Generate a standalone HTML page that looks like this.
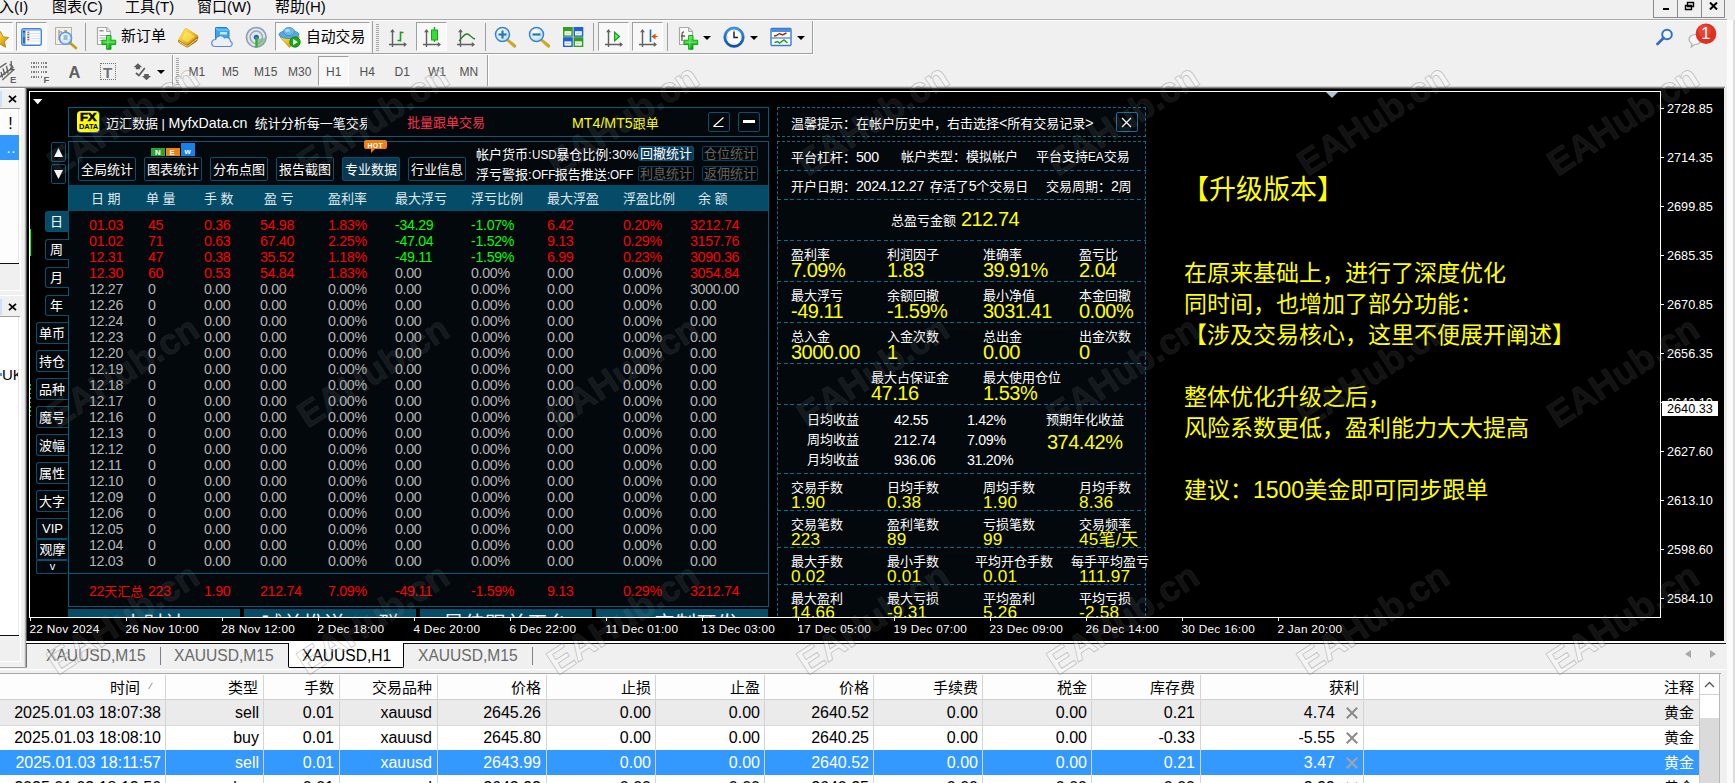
<!DOCTYPE html>
<html lang="zh"><head><meta charset="utf-8"><title>MT4</title>
<style>
*{margin:0;padding:0;box-sizing:border-box}
html,body{width:1735px;height:783px;overflow:hidden;background:#f0f0f0}
body{position:relative;font-family:"Liberation Sans","Noto Sans CJK SC",sans-serif;color:#000}
.a{position:absolute;white-space:nowrap}
.t{position:absolute;white-space:nowrap;line-height:1}
/* menu */
#menu{left:0;top:0;width:1735px;height:19px;background:#f0f0f0}
#menu span{position:absolute;top:-3px;font-size:15px;line-height:20px;white-space:nowrap;letter-spacing:0}
/* toolbars */
.hl{position:absolute;height:1px;left:0}
.sep{position:absolute;width:1px;background:#a0a0a0}
.pressed{position:absolute;background:#f7f7f7;border:1px solid #d8d8d8}
.tbt{position:absolute;font-size:15px;line-height:18px;white-space:nowrap}
.tf{position:absolute;font-size:12px;line-height:14px;color:#505050;white-space:nowrap}
/* chart */
#chart{left:26px;top:88px;width:1698px;height:553px;background:#000;overflow:hidden;border-left:1px solid #505050;border-top:1px solid #404040}
.pn{position:absolute;font-size:13px;line-height:16px;white-space:nowrap;color:#fff}
.l{font-size:14.2px}
.u{font-size:13.6px;display:inline-block;transform:scaleX(.86);transform-origin:left center;margin-right:-4px;line-height:1}
.n{font-size:14.2px;letter-spacing:-0.3px}
.box{position:absolute;border:1px solid #045a7a;background:#02080c}
.btn{position:absolute;border:1px solid #07506e;background:#02080c;color:#fff;font-size:13px;line-height:20px;text-align:center;white-space:nowrap;border-radius:2px}
.r{color:#f00}.g{color:#0f0}.w{color:#b4b4b4}.y{color:#ff0}
.row{position:absolute;left:0;height:16px;width:700px}
.row span{position:absolute;top:0;font-size:14.2px;letter-spacing:-0.3px;line-height:16px;white-space:nowrap}
.row span i{font-style:normal;font-size:13px;letter-spacing:0}
.dash{position:absolute;width:369px;height:1px;background:repeating-linear-gradient(to right,#0a6c8e 0,#0a6c8e 4px,transparent 4px,transparent 6.667px)}
.wm.d{color:rgba(150,150,150,.125);-webkit-text-stroke:1px rgba(120,120,120,.15)}
.vl.sm{font-size:17.2px;letter-spacing:0.2px}
.lb{position:absolute;font-size:13px;line-height:16px;color:#fff;white-space:nowrap}
.lb.n{font-size:14.2px;letter-spacing:-0.3px}
.vl{position:absolute;font-size:20px;letter-spacing:-0.5px;line-height:20px;color:#ff0;white-space:nowrap}
.big{position:absolute;font-size:23px;line-height:31px;color:#ff0;white-space:nowrap;left:1157px}
.ax{position:absolute;font-size:12.7px;line-height:14px;color:#fff;white-space:nowrap}
.wm{position:absolute;font-size:36px;line-height:36px;font-weight:bold;color:rgba(255,255,255,.3);-webkit-text-stroke:1px rgba(0,0,0,.2);transform:translate(-50%,-50%) rotate(-33deg);white-space:nowrap;pointer-events:none}
/* tabs */
.tab{position:absolute;top:645.5px;font-size:15.6px;line-height:20px;color:#6a6a6a;white-space:nowrap}
/* table */
.th{position:absolute;top:677px;font-size:15px;line-height:22px;text-align:right;white-space:nowrap}
.td{position:absolute;font-size:16px;line-height:25px;text-align:right;white-space:nowrap}
.cs{position:absolute;top:675px;width:1px;height:108px;background:#d4d4d4}
</style></head>
<body>
<div id="menu" class="a"><span style="left:-1px">入(I)</span><span style="left:52px">图表(C)</span><span style="left:125px">工具(T)</span><span style="left:197px">窗口(W)</span><span style="left:275px">帮助(H)</span></div>
<div class="hl" style="top:19px;width:1727px;background:#a8a8a8"></div><div class="hl" style="top:20px;width:1727px;background:#fff"></div>
<div class="a" style="left:1653px;top:0;width:72px;height:18px;border:1px solid #8a8a8a;border-top:none;background:#f0f0f0"></div><div class="sep" style="left:1677px;top:0;height:17px;background:#8a8a8a"></div><div class="sep" style="left:1701px;top:0;height:17px;background:#8a8a8a"></div><div class="a" style="left:1663px;top:8px;width:6px;height:2px;background:#000"></div><svg class="a" style="left:1684px;top:1px" width="12" height="10" viewBox="0 0 12 10"><path d="M3.5 1.5h6v4h-6z M1.5 4.5h6v4h-6z" fill="#f0f0f0" stroke="#000" stroke-width="1.4"/></svg><svg class="a" style="left:1709px;top:2px" width="9" height="8" viewBox="0 0 9 8"><path d="M1 0.5L8 7.5M8 0.5L1 7.5" stroke="#000" stroke-width="2"/></svg>
<div class="hl" style="top:86px;width:1725px;background:#d0d0d0"></div><div class="hl" style="top:87px;width:1725px;background:#8c8c8c"></div>
<svg width="0" height="0" style="position:absolute"><defs><linearGradient id="gGold" x1="0" y1="0" x2="1" y2="1"><stop offset="0" stop-color="#ffe870"/><stop offset=".5" stop-color="#f0c020"/><stop offset="1" stop-color="#b07810"/></linearGradient><linearGradient id="gGreen" x1="0" y1="0" x2="0" y2="1"><stop offset="0" stop-color="#60f060"/><stop offset="1" stop-color="#08a008"/></linearGradient><radialGradient id="gLens" cx=".4" cy=".35" r=".7"><stop offset="0" stop-color="#ffffff"/><stop offset="1" stop-color="#b8dcf8"/></radialGradient><linearGradient id="gBlue" x1="0" y1="0" x2="0" y2="1"><stop offset="0" stop-color="#3a98ec"/><stop offset="1" stop-color="#0a4cb0"/></linearGradient><linearGradient id="gHandle" x1="0" y1="0" x2="1" y2="0"><stop offset="0" stop-color="#f8e060"/><stop offset="1" stop-color="#c09010"/></linearGradient></defs></svg><div class="a" style="left:0;top:53px;width:813px;height:1px;background:#a0a0a0"></div><div class="a" style="left:0;top:54px;width:814px;height:1px;background:#fff"></div><div class="a" style="left:812px;top:21px;width:1px;height:33px;background:#a0a0a0"></div><div class="a" style="left:813px;top:21px;width:1px;height:34px;background:#fff"></div><div class="a" style="left:0;top:22px;width:13px;height:29px;background:#f8f8f8;border-top:1px solid #a0a0a0;border-right:1px solid #fff;border-bottom:1px solid #fff"></div><svg class="a" style="left:-8.5px;top:30.5px" width="18" height="18" viewBox="0 0 18 18" ><path d="M8.5 0.5l2.5 5.3 5.7 .7-4.2 4 1.1 5.8-5.1-2.9-5.1 2.9 1.1-5.800-4.2-4 5.700-.7z" fill="url(#gGold)" stroke="#b08018" stroke-width=".8"/></svg><div class="a" style="left:16px;top:22px;width:31px;height:29px;background:#f8f8f8;border-left:1px solid #a0a0a0;border-top:1px solid #a0a0a0;border-right:1px solid #fff;border-bottom:1px solid #fff"></div><svg class="a" style="left:21px;top:28px" width="21" height="18" viewBox="0 0 21 18" ><rect x=".7" y=".7" width="19.600" height="16.600" rx="2" fill="#fff" stroke="#3f84d8" stroke-width="1.400"/><rect x="1.400" y="1.400" width="3.200" height="15.200" fill="#5a9ce8"/><rect x="1.400" y="1.400" width="18.200" height="1.300" fill="#7ab4f0"/><path d="M6 5.500h13M6 8h13M6 10.500h13M6 13h13" stroke="#d4e0fa" stroke-width="1"/><rect x="6.300" y="3.600" width="2" height="1.300" fill="#f04040"/><rect x="6.300" y="6" width="2" height="1.300" fill="#508050"/><rect x="6.300" y="8.600" width="2" height="1.300" fill="#406040"/><rect x="6.300" y="11" width="2" height="1.300" fill="#f04040"/><rect x="2.300" y="3" width="1.400" height="1.400" fill="#102040"/><rect x="2.300" y="9" width="1.400" height="6" fill="#305890"/></svg><svg class="a" style="left:54px;top:26px" width="25" height="24" viewBox="0 0 25 24" ><rect x="1.500" y="1.500" width="16" height="17" fill="#f4efe4" stroke="#b8b0a0"/><path d="M5 4v10M5 6h3M12 4v8M10 5h3" stroke="#808890" stroke-width="1"/><path d="M15.500 16.500l6.500 5.500" stroke="#c89818" stroke-width="2.600" stroke-linecap="round"/><circle cx="11.500" cy="12.300" r="6" fill="url(#gLens)" fill-opacity=".85" stroke="#5a98e0" stroke-width="1.600"/><rect x="9.500" y="9" width="4" height="5" fill="#a0b8d0"/></svg><div class="sep" style="left:85px;top:23px;height:28px"></div><svg class="a" style="left:95px;top:26px" width="23" height="25" viewBox="0 0 23 25" ><path d="M2.500 1.500h9l4 4v13h-13z" fill="#fafafa" stroke="#a8a8a8" stroke-width="1.200" stroke-linejoin="round"/><path d="M11.500 1.500v4h4" fill="#e0e0e0" stroke="#a8a8a8"/><rect x="4.500" y="4" width="4" height="1.500" fill="#909090"/><path d="M4.500 9.500h8M4.500 12h8M4.500 14.500h5" stroke="#b0b0b0"/><path d="M11.600 9.500h4.400v4.700h4.700v4.400h-4.700v4.700h-4.400v-4.700h-4.700v-4.400h4.700z" fill="url(#gGreen)" stroke="#08a008" stroke-width=".9"/><path d="M12.800 10.500v12M8 16.200h11.500" stroke="#90ff90" stroke-width="1" stroke-opacity=".6"/></svg><div class="tbt" style="left:121px;top:27px">新订单</div><svg class="a" style="left:177px;top:27px" width="23" height="22" viewBox="0 0 23 22" ><path d="M7.500 2.300q1-1.400 2.600-.5l10.400 6.700q1.300 1 .7 2.600l-.8 2.200q-.4 1-1.400 1.700l-7.500 5q-1.300.8-2.600 0l-6.900-4.300q-1.400-1-.7-2.500z" fill="#a86c10"/><path d="M7.600 1.900q1-1.300 2.500-.4l10 6.500q1.300 1 .2 2.100l-9 7.200q-1.200.9-2.500.1l-6.300-4q-1.300-.9-.6-2.300z" fill="url(#gGold)"/><path d="M8.500 3.500l9.500 6-7.500 6-5.500-3.500z" fill="#fff27a" fill-opacity=".55"/><path d="M2.300 14.600l6.700 4.200q1.200.7 2.400-.1l8.600-6.700" fill="none" stroke="#ffe890" stroke-width=".9"/></svg><svg class="a" style="left:211px;top:26px" width="23" height="22" viewBox="0 0 23 22" ><path d="M4.500 1.500h11l2.500 2.500v10h-13.500z" fill="#38a8f0" stroke="#2080d8"/><path d="M4.500 1.500l2.500 2.500h11" fill="none" stroke="#90d0ff"/><rect x="9" y="6" width="7" height="2.500" fill="#c0e4ff"/><path d="M4 20.500a3.500 3.500 0 0 1 .5-7 5 5 0 0 1 9-1.500 4 4 0 0 1 6 3.500 2.600 2.600 0 0 1-.5 5z" fill="#e8f0fa" stroke="#6088c8" stroke-width="1.200"/></svg><svg class="a" style="left:245px;top:26px" width="23" height="23" viewBox="0 0 23 23" ><circle cx="11.300" cy="11.300" r="9.800" fill="#e4e8e4" stroke="#8ca0b8" stroke-width="1.600"/><circle cx="11.300" cy="11.300" r="6.200" fill="none" stroke="#98a8c0" stroke-width="1.500"/><circle cx="11.300" cy="11.300" r="2.600" fill="#2060d0"/><path d="M11.300 11.300A9.800 9.800 0 0 0 21 11.300 9.800 9.800 0 0 1 11.300 21z" fill="#80b080" fill-opacity=".7"/><rect x="10.300" y="11.300" width="2.400" height="10" fill="#30b030"/></svg><div class="a" style="left:275px;top:22px;width:95px;height:29px;background:#f8f8f8;border-left:1px solid #a0a0a0;border-top:1px solid #a0a0a0;border-right:1px solid #fff;border-bottom:1px solid #fff"></div><svg class="a" style="left:278px;top:26px" width="24" height="23" viewBox="0 0 24 23" ><path d="M2 11l9.500 10.500 10-10.500-4-4h-11z" fill="url(#gGold)" stroke="#c09818" stroke-width=".8"/><ellipse cx="11" cy="8.500" rx="10" ry="4" fill="#58a8e0" stroke="#3888c8" stroke-width=".8"/><ellipse cx="11" cy="5.500" rx="5.500" ry="4" fill="#70b8e8" stroke="#3888c8" stroke-width=".8"/><ellipse cx="9.500" cy="4.500" rx="2.500" ry="1.500" fill="#b0dcf8"/><circle cx="17" cy="16" r="5.200" fill="#18a818" stroke="#088008" stroke-width=".8"/><path d="M15.200 13l4.600 3-4.600 3z" fill="#fff"/></svg><div class="tbt" style="left:306px;top:28px;font-size:14.8px">自动交易</div><div class="sep" style="left:372px;top:21px;height:32px"></div><div class="a" style="left:376px;top:24px;width:3px;height:28px;background:repeating-linear-gradient(to bottom,#a8a8a8 0,#a8a8a8 1px,#f0f0f0 1px,#f0f0f0 2px)"></div><svg class="a" style="left:0;top:0" width="820" height="55" viewBox="0 0 820 55"><path d="M392.5 30.500V47M389 44.500H404" stroke="#606060" stroke-width="1.400" fill="none"/><path d="M392.5 29l-2.400 3.200h4.800z M407 44.500l-3.200-2.400v4.800z" fill="#606060"/><path d="M400.500 31.500V41.500M400.500 32.500h3M397.500 40.500h3" stroke="#18a018" stroke-width="1.600" fill="none"/></svg><div class="a" style="left:416px;top:22px;width:31px;height:29px;background:#f8f8f8;border-left:1px solid #a0a0a0;border-top:1px solid #a0a0a0;border-right:1px solid #fff;border-bottom:1px solid #fff"></div><svg class="a" style="left:0;top:0" width="820" height="55" viewBox="0 0 820 55"><path d="M426.5 30.500V47M423 44.500H438" stroke="#606060" stroke-width="1.400" fill="none"/><path d="M426.5 29l-2.400 3.200h4.800z M441 44.500l-3.200-2.400v4.800z" fill="#606060"/><path d="M434.500 27v15" stroke="#18a018" stroke-width="1.400"/><rect x="431.500" y="30" width="6" height="10" fill="#30e030" stroke="#18a018"/><path d="M460.5 30.500V47M457 44.500H472" stroke="#606060" stroke-width="1.400" fill="none"/><path d="M460.5 29l-2.400 3.200h4.800z M475 44.500l-3.200-2.400v4.800z" fill="#606060"/><path d="M459 41c3-3 5-7 8-7s4 4 8 5" stroke="#208020" stroke-width="1.400" fill="none"/></svg><div class="sep" style="left:485px;top:23px;height:28px"></div><svg class="a" style="left:0;top:0" width="820" height="55" viewBox="0 0 820 55"><path d="M508 40.500l6.500 5.500" stroke="url(#gHandle)" stroke-width="3.200" stroke-linecap="round"/><path d="M508 40.500l6.500 5.500" stroke="#d0a828" stroke-width="2.400" stroke-linecap="round"/><circle cx="502.5" cy="34.500" r="7" fill="url(#gLens)" stroke="#3c84d0" stroke-width="1.500"/><path d="M498.5 34.500h8" stroke="#2878a8" stroke-width="2.200"/><path d="M502.5 30.500v8" stroke="#2878a8" stroke-width="2.200"/><path d="M542 40.500l6.500 5.500" stroke="url(#gHandle)" stroke-width="3.200" stroke-linecap="round"/><path d="M542 40.500l6.500 5.500" stroke="#d0a828" stroke-width="2.400" stroke-linecap="round"/><circle cx="536.5" cy="34.500" r="7" fill="url(#gLens)" stroke="#3c84d0" stroke-width="1.500"/><path d="M532.5 34.500h8" stroke="#2878a8" stroke-width="2.200"/><rect x="563" y="27" width="9.800" height="9.800" fill="#30a020"/><rect x="564.5" y="31.2" width="6.800" height="4.200" fill="#fff"/><rect x="565.6" y="32.6" width="4.500" height="1.200" fill="#30a020" fill-opacity=".35"/><rect x="573.5" y="27" width="9.800" height="9.800" fill="#2060e0"/><rect x="575" y="31.2" width="6.800" height="4.200" fill="#fff"/><rect x="576.1" y="32.6" width="4.500" height="1.200" fill="#2060e0" fill-opacity=".35"/><rect x="563" y="37.2" width="9.800" height="9.800" fill="#2060e0"/><rect x="564.5" y="41.4" width="6.800" height="4.200" fill="#fff"/><rect x="565.6" y="42.8" width="4.500" height="1.200" fill="#2060e0" fill-opacity=".35"/><rect x="573.5" y="37.2" width="9.800" height="9.800" fill="#30a020"/><rect x="575" y="41.4" width="6.800" height="4.200" fill="#fff"/><rect x="576.1" y="42.8" width="4.500" height="1.200" fill="#30a020" fill-opacity=".35"/></svg><div class="sep" style="left:593px;top:23px;height:28px"></div><div class="a" style="left:598px;top:22px;width:31px;height:29px;background:#f8f8f8;border-left:1px solid #a0a0a0;border-top:1px solid #a0a0a0;border-right:1px solid #fff;border-bottom:1px solid #fff"></div><div class="a" style="left:632px;top:22px;width:31px;height:29px;background:#f8f8f8;border-left:1px solid #a0a0a0;border-top:1px solid #a0a0a0;border-right:1px solid #fff;border-bottom:1px solid #fff"></div><svg class="a" style="left:0;top:0" width="820" height="55" viewBox="0 0 820 55"><path d="M608.5 30.500V47M605 44.500H620" stroke="#606060" stroke-width="1.400" fill="none"/><path d="M608.5 29l-2.400 3.200h4.800z M623 44.500l-3.200-2.400v4.800z" fill="#606060"/><path d="M614.600 32.300l4.800 4.200-4.800 4.200z" fill="#70e870" stroke="#18a018" stroke-width="1.300"/><path d="M642.5 30.500V47M639 44.500H654" stroke="#606060" stroke-width="1.400" fill="none"/><path d="M642.5 29l-2.400 3.200h4.800z M657 44.500l-3.200-2.400v4.800z" fill="#606060"/><path d="M650.500 29.500V42" stroke="#1870a8" stroke-width="1.600"/><path d="M657.500 36.500h-5" stroke="#e05008" stroke-width="1.400"/><path d="M651.500 36.500l4-3v6z" fill="#e05008"/></svg><div class="sep" style="left:667px;top:23px;height:28px"></div><svg class="a" style="left:677px;top:26px" width="23" height="25" viewBox="0 0 23 25" ><path d="M2.500 1.500h9l4 4v13h-13z" fill="#fafafa" stroke="#a8a8a8" stroke-width="1.200" stroke-linejoin="round"/><path d="M11.500 1.500v4h4" fill="#e0e0e0" stroke="#a8a8a8"/><path d="M7 6c-2 0-2 1-2 3v6M4 10h4" stroke="#605840" stroke-width="1.300" fill="none"/><path d="M11.600 9.500h4.400v4.700h4.700v4.400h-4.700v4.700h-4.400v-4.700h-4.700v-4.400h4.700z" fill="url(#gGreen)" stroke="#08a008" stroke-width=".9"/><path d="M12.800 10.500v12M8 16.200h11.500" stroke="#90ff90" stroke-width="1" stroke-opacity=".6"/></svg><svg class="a" style="left:703px;top:36px" width="8" height="4" viewBox="0 0 8 4" ><path d="M0 0h8L4 4z" fill="#000"/></svg><svg class="a" style="left:723px;top:26px" width="23" height="23" viewBox="0 0 23 23" ><circle cx="11" cy="11.200" r="9" fill="#fff" stroke="url(#gBlue)" stroke-width="2.600"/><circle cx="11" cy="11.200" r="10.200" fill="none" stroke="#1860b8" stroke-width=".6"/><path d="M11 5.500v6h4" stroke="#202020" stroke-width="1.500" fill="none"/><path d="M11 3.800v1M11 17.500v1M3.800 11.200h1M17.500 11.200h1" stroke="#a0a0a0"/></svg><svg class="a" style="left:750px;top:36px" width="8" height="4" viewBox="0 0 8 4" ><path d="M0 0h8L4 4z" fill="#000"/></svg><svg class="a" style="left:770px;top:27px" width="23" height="20" viewBox="0 0 23 20" ><rect x="1" y="1.500" width="20" height="17" rx="1" fill="#fff" stroke="#3878d0" stroke-width="1.400"/><rect x="1.500" y="2" width="19" height="3" fill="#4890e0"/><path d="M1.500 11h19" stroke="#5090e0" stroke-width="1.400"/><path d="M4 9l2.500-.5 3-2 3 1.500 4-2" stroke="#b02808" stroke-width="1.500" fill="none"/><path d="M4.500 15.500l3-1 2 1.500 4.500-3 3.500 3" stroke="#18a018" stroke-width="1.500" fill="none"/></svg><svg class="a" style="left:797px;top:36px" width="8" height="4" viewBox="0 0 8 4" ><path d="M0 0h8L4 4z" fill="#000"/></svg><svg class="a" style="left:1655px;top:27px" width="20" height="20" viewBox="0 0 20 20" ><circle cx="12" cy="7.500" r="4.800" fill="#f4f8ff" stroke="#3070d0" stroke-width="2"/><path d="M8.500 11l-6 6" stroke="#3868c8" stroke-width="2.800" stroke-linecap="round"/></svg><svg class="a" style="left:1687px;top:22px" width="34" height="28" viewBox="0 0 34 28" ><path d="M2 17.500a6 5 0 0 1 12 0 6 5 0 0 1-6.500 5l-3.200 2.500 .5-3.400a5.500 5 0 0 1-2.800-4.100z" fill="#f6f6f6" stroke="#b0b0b0" stroke-width="1.200"/><circle cx="19" cy="11.800" r="10.300" fill="#e03020"/><circle cx="17.500" cy="9" r="6.500" fill="#f05848" fill-opacity=".5"/></svg><div class="t" style="left:1701px;top:25px;font-size:17px;color:#fff">1</div>
<div class="a" style="left:487px;top:55px;width:1px;height:31px;background:#a0a0a0"></div><div class="a" style="left:488px;top:55px;width:1px;height:31px;background:#fff"></div><svg class="a" style="left:0px;top:60px" width="17" height="24" viewBox="0 0 17 24" ><path d="M-1 8L6.500 3.200M-1 17.500L13.500 7.200M2.300 20L14.500 9" stroke="#6a6a6a" stroke-width="1.500" fill="none"/><path d="M11.200 1V10.500M9.500 4.500l3.500 2M10 8.500l4 1.500M3 8.500l2 6.500M6.500 6l1.500 7.500M1 12l1.500 5.500" stroke="#5a5a5a" stroke-width="1.300" fill="none"/></svg><div class="t" style="left:10px;top:75px;font-size:9.500px;font-weight:bold;color:#606060">E</div><div class="a" style="left:31px;top:62px;width:17px;height:2px;background:repeating-linear-gradient(to right,#808080 0,#808080 1.200px,#f0f0f0 1.200px,#f0f0f0 2.400px)"></div><div class="a" style="left:31px;top:66px;width:17px;height:2px;background:repeating-linear-gradient(to right,#808080 0,#808080 1.200px,#f0f0f0 1.200px,#f0f0f0 2.400px)"></div><div class="a" style="left:31px;top:71px;width:17px;height:2px;background:repeating-linear-gradient(to right,#808080 0,#808080 1.200px,#f0f0f0 1.200px,#f0f0f0 2.400px)"></div><div class="a" style="left:31px;top:76px;width:12px;height:2px;background:repeating-linear-gradient(to right,#808080 0,#808080 1.200px,#f0f0f0 1.200px,#f0f0f0 2.400px)"></div><div class="t" style="left:43.500px;top:75px;font-size:9.500px;font-weight:bold;color:#606060">F</div><div class="t" style="left:68.500px;top:63.500px;font-size:16.500px;font-weight:bold;color:#606060">A</div><div class="a" style="left:100px;top:63px;width:16px;height:17px;border:1.500px dotted #707070"></div><div class="t" style="left:103px;top:65px;font-size:15px;font-weight:bold;color:#707070">T</div><svg class="a" style="left:133px;top:61px" width="19" height="20" viewBox="0 0 19 20" ><path d="M4.900 2.300L9.200 6.300H7V8.200H2.800V6.300H.6z M13.500 19.200L9 15H11.200V13H15.800V15H18z" fill="#5c5c5c"/><path d="M2.900 12l3 2.500L11.800 7" stroke="#5c5c5c" stroke-width="1.700" fill="none"/></svg><svg class="a" style="left:157px;top:70px" width="8" height="4" viewBox="0 0 8 4" ><path d="M0 0h8L4 4z" fill="#000"/></svg><div class="a" style="left:172px;top:55px;width:1px;height:31px;background:#a0a0a0"></div><div class="a" style="left:173px;top:55px;width:1px;height:31px;background:#fff"></div><div class="a" style="left:176px;top:58px;width:3px;height:27px;background:repeating-linear-gradient(to bottom,#a8a8a8 0,#a8a8a8 1px,#f0f0f0 1px,#f0f0f0 2px)"></div><div class="a" style="left:318px;top:56px;width:31px;height:30px;background:#f8f8f8;border-left:1px solid #a0a0a0;border-top:1px solid #a0a0a0;border-right:1px solid #fff;border-bottom:1px solid #fff"></div><div class="tf" style="left:188.5px;top:65px">M1</div><div class="tf" style="left:222px;top:65px">M5</div><div class="tf" style="left:254px;top:65px">M15</div><div class="tf" style="left:288px;top:65px">M30</div><div class="tf" style="left:326px;top:65px">H1</div><div class="tf" style="left:359.5px;top:65px">H4</div><div class="tf" style="left:394.5px;top:65px">D1</div><div class="tf" style="left:428px;top:65px">W1</div><div class="tf" style="left:459.5px;top:65px">MN</div>
<div class="a" style="left:0;top:88px;width:26px;height:579px;background:#f0f0f0;overflow:hidden"><div class="a" style="left:0;top:0;width:26px;height:1px;background:#fff"></div><div class="a" style="left:0;top:3px;width:2px;height:16px;background:#cfe0f4"></div><svg class="a" style="left:7.5px;top:6.5px" width="9" height="8" viewBox="0 0 9 8" ><path d="M1 .8L8 7.200M8 .8L1 7.200" stroke="#000" stroke-width="1.700"/></svg><div class="a" style="left:0;top:20px;width:20px;height:1px;background:#a0a0a0"></div><div class="a" style="left:0;top:21px;width:19px;height:154px;background:#fdfdfd;border-right:1px solid #e6e6e6"></div><div class="a" style="left:19px;top:21px;width:2px;height:156px;background:#fff"></div><div class="t" style="left:8.300px;top:27.500px;font-size:16px;color:#000">!</div><div class="a" style="left:0;top:47px;width:19px;height:25px;background:#3399ff"></div><div class="t" style="left:6.500px;top:52px;font-size:15px;color:#fff;letter-spacing:0.5px">..</div><div class="a" style="left:0;top:175px;width:19px;height:1px;background:#101010"></div><div class="a" style="left:0;top:202px;width:22px;height:1px;background:#fff"></div><div class="a" style="left:20px;top:177px;width:1px;height:26px;background:#fff"></div><div class="a" style="left:0;top:207px;width:26px;height:1px;background:#fff"></div><div class="a" style="left:0;top:211px;width:2px;height:16px;background:#cfe0f4"></div><svg class="a" style="left:7.5px;top:214.5px" width="9" height="8" viewBox="0 0 9 8" ><path d="M1 .8L8 7.200M8 .8L1 7.200" stroke="#000" stroke-width="1.700"/></svg><div class="a" style="left:0;top:228px;width:20px;height:1px;background:#a0a0a0"></div><div class="a" style="left:0;top:229px;width:19px;height:318px;background:#fff;border-right:1px solid #e6e6e6;overflow:hidden"><div class="a" style="left:0;top:56px;width:2px;height:3px;background:#4a98e8"></div><div class="t" style="left:2px;top:50px;font-size:15px;color:#000">UK</div></div><div class="a" style="left:19px;top:229px;width:2px;height:320px;background:#fff"></div><div class="a" style="left:0;top:547px;width:19px;height:1px;background:#101010"></div><div class="a" style="left:0;top:573px;width:22px;height:1px;background:#fff"></div><div class="a" style="left:20px;top:548px;width:1px;height:26px;background:#fff"></div><div class="a" style="left:24px;top:0;width:1px;height:579px;background:#e0e0e0"></div><div class="a" style="left:25px;top:0;width:1px;height:579px;background:#b0b0b0"></div></div><div class="a" style="left:0;top:667px;width:27px;height:1px;background:#a0a0a0"></div>
<div class="a" style="left:1724px;top:88px;width:3px;height:555px;background:#ececec"></div><div class="a" style="left:1727px;top:20px;width:6px;height:763px;background:#fbfbfb"></div><div class="a" style="left:1733px;top:20px;width:2px;height:763px;background:#dcdcdc"></div>
<div class="a" style="left:27px;top:641px;width:1697px;height:2px;background:#fff"></div><div class="a" style="left:26px;top:643px;width:1700px;height:1px;background:#101010"></div><div class="a" style="left:26px;top:644px;width:1px;height:23px;background:#707070"></div><div class="tab" style="left:46px">XAUUSD,M15</div><div class="tab" style="left:174px">XAUUSD,M15</div><div class="tab" style="left:418px">XAUUSD,M15</div><div class="a" style="left:160px;top:647px;width:1px;height:18px;background:#808080"></div><div class="a" style="left:532px;top:647px;width:1px;height:18px;background:#808080"></div><div class="a" style="left:288px;top:643px;width:116px;height:25px;background:#fff;border:1px solid #000;border-top:none;border-radius:0 0 2px 2px"></div><div class="tab" style="left:302px;color:#000">XAUUSD,H1</div><svg class="a" style="left:1685px;top:650px" width="6" height="8" viewBox="0 0 6 8" ><path d="M6 0v8L0 4z" fill="#a8a8a8"/></svg><svg class="a" style="left:1710px;top:650px" width="6" height="8" viewBox="0 0 6 8" ><path d="M0 0v8L6 4z" fill="#a8a8a8"/></svg>
<div class="a" style="left:0;top:668px;width:1727px;height:5px;background:#f0f0f0"></div><div class="a" style="left:0;top:669px;width:1727px;height:1px;background:#fff"></div><div class="a" style="left:0;top:673px;width:1721px;height:1px;background:#a8a8a8"></div><div class="a" style="left:0;top:674px;width:1699px;height:26px;background:#fdfdfd"></div><div class="a" style="left:0;top:699px;width:1699px;height:1px;background:#d0d0d0"></div><div class="a" style="left:0;top:700px;width:1699px;height:25px;background:#ebebeb"></div><div class="a" style="left:0;top:725px;width:1699px;height:1px;background:#d8d8d8"></div><div class="a" style="left:0;top:726px;width:1699px;height:24px;background:#fff"></div><div class="a" style="left:0;top:750px;width:1699px;height:25px;background:#3399ff"></div><div class="a" style="left:0;top:775px;width:1699px;height:8px;background:#fff"></div><div class="cs" style="left:165px"></div><div class="cs" style="left:263px"></div><div class="cs" style="left:339px"></div><div class="cs" style="left:437px"></div><div class="cs" style="left:546px"></div><div class="cs" style="left:655px"></div><div class="cs" style="left:764px"></div><div class="cs" style="left:873px"></div><div class="cs" style="left:982px"></div><div class="cs" style="left:1091px"></div><div class="cs" style="left:1200px"></div><div class="cs" style="left:1363px"></div><div class="th" style="right:1595px">时间</div><div class="th" style="right:1477px">类型</div><div class="th" style="right:1401px">手数</div><div class="th" style="right:1303px">交易品种</div><div class="th" style="right:1194px">价格</div><div class="th" style="right:1084px">止损</div><div class="th" style="right:975px">止盈</div><div class="th" style="right:866px">价格</div><div class="th" style="right:757px">手续费</div><div class="th" style="right:648px">税金</div><div class="th" style="right:540px">库存费</div><div class="th" style="right:376px">获利</div><div class="th" style="right:41px">注释</div><div class="t" style="left:150px;top:682px;font-size:9px;color:#606060">&#x2215;</div><div class="td" style="right:1574px;top:700px;color:#000">2025.01.03 18:07:38</div><div class="td" style="right:1476px;top:700px;color:#000">sell</div><div class="td" style="right:1401px;top:700px;color:#000">0.01</div><div class="td" style="right:1303px;top:700px;color:#000">xauusd</div><div class="td" style="right:1194px;top:700px;color:#000">2645.26</div><div class="td" style="right:1084px;top:700px;color:#000">0.00</div><div class="td" style="right:975px;top:700px;color:#000">0.00</div><div class="td" style="right:866px;top:700px;color:#000">2640.52</div><div class="td" style="right:757px;top:700px;color:#000">0.00</div><div class="td" style="right:648px;top:700px;color:#000">0.00</div><div class="td" style="right:540px;top:700px;color:#000">0.21</div><div class="td" style="right:400px;top:700px;color:#000">4.74</div><div class="td" style="right:41px;top:700px;color:#000"><span style="font-size:15px">黄金</span></div><svg class="a" style="left:1345.5px;top:706.5px" width="12" height="12" viewBox="0 0 12 12" ><path d="M.8 .8L11.200 11.200M11.200 .8L.8 11.200" stroke="#8a8a8a" stroke-width="2"/></svg><div class="td" style="right:1574px;top:725px;color:#000">2025.01.03 18:08:10</div><div class="td" style="right:1476px;top:725px;color:#000">buy</div><div class="td" style="right:1401px;top:725px;color:#000">0.01</div><div class="td" style="right:1303px;top:725px;color:#000">xauusd</div><div class="td" style="right:1194px;top:725px;color:#000">2645.80</div><div class="td" style="right:1084px;top:725px;color:#000">0.00</div><div class="td" style="right:975px;top:725px;color:#000">0.00</div><div class="td" style="right:866px;top:725px;color:#000">2640.25</div><div class="td" style="right:757px;top:725px;color:#000">0.00</div><div class="td" style="right:648px;top:725px;color:#000">0.00</div><div class="td" style="right:540px;top:725px;color:#000">-0.33</div><div class="td" style="right:400px;top:725px;color:#000">-5.55</div><div class="td" style="right:41px;top:725px;color:#000"><span style="font-size:15px">黄金</span></div><svg class="a" style="left:1345.5px;top:731.5px" width="12" height="12" viewBox="0 0 12 12" ><path d="M.8 .8L11.200 11.200M11.200 .8L.8 11.200" stroke="#8a8a8a" stroke-width="2"/></svg><div class="td" style="right:1574px;top:750px;color:#fff">2025.01.03 18:11:57</div><div class="td" style="right:1476px;top:750px;color:#fff">sell</div><div class="td" style="right:1401px;top:750px;color:#fff">0.01</div><div class="td" style="right:1303px;top:750px;color:#fff">xauusd</div><div class="td" style="right:1194px;top:750px;color:#fff">2643.99</div><div class="td" style="right:1084px;top:750px;color:#fff">0.00</div><div class="td" style="right:975px;top:750px;color:#fff">0.00</div><div class="td" style="right:866px;top:750px;color:#fff">2640.52</div><div class="td" style="right:757px;top:750px;color:#fff">0.00</div><div class="td" style="right:648px;top:750px;color:#fff">0.00</div><div class="td" style="right:540px;top:750px;color:#fff">0.21</div><div class="td" style="right:400px;top:750px;color:#fff">3.47</div><div class="td" style="right:41px;top:750px;color:#fff"><span style="font-size:15px">黄金</span></div><svg class="a" style="left:1345.5px;top:756.5px" width="12" height="12" viewBox="0 0 12 12" ><path d="M.8 .8L11.200 11.200M11.200 .8L.8 11.200" stroke="#a4a4a4" stroke-width="2"/></svg><div class="td" style="right:1574px;top:775px;color:#000">2025.01.03 18:13:56</div><div class="td" style="right:1476px;top:775px;color:#000">buy</div><div class="td" style="right:1401px;top:775px;color:#000">0.01</div><div class="td" style="right:1303px;top:775px;color:#000">xauusd</div><div class="td" style="right:1194px;top:775px;color:#000">2643.92</div><div class="td" style="right:1084px;top:775px;color:#000">0.00</div><div class="td" style="right:975px;top:775px;color:#000">0.00</div><div class="td" style="right:866px;top:775px;color:#000">2640.25</div><div class="td" style="right:757px;top:775px;color:#000">0.00</div><div class="td" style="right:648px;top:775px;color:#000">0.00</div><div class="td" style="right:540px;top:775px;color:#000">0.00</div><div class="td" style="right:400px;top:775px;color:#000">-3.99</div><div class="td" style="right:41px;top:775px;color:#000"><span style="font-size:15px">黄金</span></div><svg class="a" style="left:1345.5px;top:781.5px" width="12" height="12" viewBox="0 0 12 12" ><path d="M.8 .8L11.200 11.200M11.200 .8L.8 11.200" stroke="#8a8a8a" stroke-width="2"/></svg><div class="a" style="left:1699px;top:674px;width:21px;height:109px;background:#fff;border-left:1px solid #c8c8c8;border-right:1px solid #b8b8b8"></div><div class="a" style="left:1700px;top:694px;width:19px;height:1px;background:#d0d0d0"></div><div class="a" style="left:1700px;top:718px;width:19px;height:65px;background:#dadada"></div><svg class="a" style="left:1704px;top:681px" width="11" height="7" viewBox="0 0 11 7" ><path d="M1 6L5.500 1.500 10 6" stroke="#505050" stroke-width="1.300" fill="none"/></svg>
<div class="wm" style="left:123px;top:120px">EAHub.cn</div><div class="wm" style="left:373px;top:120px">EAHub.cn</div><div class="wm" style="left:623px;top:120px">EAHub.cn</div><div class="wm" style="left:873px;top:120px">EAHub.cn</div><div class="wm" style="left:1123px;top:120px">EAHub.cn</div><div class="wm" style="left:1373px;top:120px">EAHub.cn</div><div class="wm" style="left:1623px;top:120px">EAHub.cn</div><div class="wm" style="left:123px;top:372px">EAHub.cn</div><div class="wm" style="left:373px;top:372px">EAHub.cn</div><div class="wm" style="left:623px;top:372px">EAHub.cn</div><div class="wm" style="left:873px;top:372px">EAHub.cn</div><div class="wm" style="left:1123px;top:372px">EAHub.cn</div><div class="wm" style="left:1373px;top:372px">EAHub.cn</div><div class="wm" style="left:1623px;top:372px">EAHub.cn</div><div class="wm" style="left:123px;top:619px">EAHub.cn</div><div class="wm" style="left:373px;top:619px">EAHub.cn</div><div class="wm" style="left:623px;top:619px">EAHub.cn</div><div class="wm" style="left:873px;top:619px">EAHub.cn</div><div class="wm" style="left:1123px;top:619px">EAHub.cn</div><div class="wm" style="left:1373px;top:619px">EAHub.cn</div><div class="wm" style="left:1623px;top:619px">EAHub.cn</div>
<div id="chart" class="a">
<div class="a" style="left:2px;top:2px;width:1632px;height:527px;border:1px solid #fff;border-bottom:1px solid #fff"></div><svg class="a" style="left:6px;top:10px" width="10" height="6"><path d="M0 0h9.400l-4.700 5.200z" fill="#fff"/></svg><svg class="a" style="left:1299px;top:3px" width="12" height="6"><path d="M0 0h12l-6 6z" fill="#a9c4d8"/></svg><div class="a" style="left:3px;top:140px;width:1px;height:27px;background:#0f0"></div><div class="a" style="left:3px;top:295px;width:1px;height:32px;background:repeating-linear-gradient(to bottom,#0c0 0,#0c0 1.500px,transparent 1.500px,transparent 4.400px)"></div><div id="lp" class="a" style="left:0;top:0;width:748px;height:528px;overflow:hidden"><div class="box" style="left:41px;top:18px;width:701px;height:30px"></div><div class="a" style="left:50px;top:22px;width:23px;height:22px;background:#ff0;border-radius:4px;border-right:1px solid #2a50c8;border-bottom:1px solid #2a50c8"></div><div class="t" style="left:52.5px;top:23.8px;font-size:10.4px;font-weight:bold;color:#000;letter-spacing:-0.2px;-webkit-text-stroke:0.55px #000;transform:scaleX(1.26);transform-origin:left top">FX</div><div class="t" style="left:52px;top:34px;font-size:7.5px;font-weight:bold;color:#000;letter-spacing:-0.2px">DATA</div><div class="pn" style="left:79px;top:26px">迈汇数据 | <span class="l">MyfxData.cn</span>&nbsp; 统计分析每一笔交易</div><div class="a" style="left:340px;top:23px;width:30px;height:22px;background:#02080c"></div><div class="pn" style="left:380px;top:26px;color:#ff3050">批量跟单交易</div><div class="pn" style="left:545px;top:26px;color:#ff0"><span class="l">MT4/MT5</span>跟单</div><div class="btn" style="left:681px;top:23px;width:22px;height:20px"></div><svg class="a" style="left:685px;top:27px" width="14" height="12"><path d="M1.5 10.5L11.5 1.5M1.5 10.5H11.5" stroke="#fff" stroke-width="1.2" fill="none"/></svg><div class="btn" style="left:711px;top:23px;width:22px;height:20px"></div><div class="a" style="left:716px;top:31px;width:12px;height:3px;background:#fff"></div><div class="box" style="left:41px;top:52px;width:701px;height:466px"></div><div class="a" style="left:42px;top:96px;width:699px;height:26px;background:#044c68"></div><div class="a" style="left:42px;top:484px;width:699px;height:1px;background:#045a7a"></div><div class="btn" style="left:24px;top:53px;width:15px;height:20px"></div><svg class="a" style="left:27px;top:59px" width="9" height="9"><path d="M4.5 0L9 9H0z" fill="#fff"/></svg><div class="btn" style="left:24px;top:75px;width:15px;height:20px"></div><svg class="a" style="left:27px;top:81px" width="9" height="9"><path d="M0 0H9L4.5 9z" fill="#fff"/></svg><div class="btn" style="left:51px;top:68px;width:58px;height:24px;line-height:24px">全局统计</div><div class="btn" style="left:117px;top:68px;width:58px;height:24px;line-height:24px">图表统计</div><div class="btn" style="left:183px;top:68px;width:58px;height:24px;line-height:24px">分布点图</div><div class="btn" style="left:249px;top:68px;width:58px;height:24px;line-height:24px">报告截图</div><div class="btn" style="left:315px;top:68px;width:58px;height:24px;line-height:24px;background:#0a3850">专业数据</div><div class="btn" style="left:381px;top:68px;width:58px;height:24px;line-height:24px">行业信息</div><div class="a" style="left:124px;top:59px;width:14px;height:8px;background:#2ea12e"></div><div class="a" style="left:139px;top:59px;width:14px;height:8px;background:#f08010"></div><div class="a" style="left:154px;top:54px;width:14px;height:13px;background:#1a80e8"></div><div class="t" style="left:128.0px;top:59.5px;font-size:8px;font-weight:bold;color:#fff">N</div><div class="t" style="left:142.5px;top:59.5px;font-size:8px;font-weight:bold;color:#fff">E</div><div class="t" style="left:157.5px;top:59.0px;font-size:8px;font-weight:bold;color:#fff">w</div><svg class="a" style="left:337px;top:51px" width="23" height="13"><path d="M2 0h19a2 2 0 0 1 2 2v5a2 2 0 0 1-2 2h-10l-4 4v-4h-5a2 2 0 0 1-2-2v-5a2 2 0 0 1 2-2z" fill="#f08010"/></svg><div class="t" style="left:340.5px;top:53.0px;font-size:7px;font-weight:bold;color:#fff;letter-spacing:0.2px">HOT</div><div class="pn" style="left:449px;top:58px">帐户货币:<span class="u">USD</span>暴仓比例:<span style="font-size:13.2px">30%</span></div><div class="pn" style="left:449px;top:78px">浮亏警报:<span class="u">OFF</span>报告推送:<span class="u">OFF</span></div><div class="btn" style="left:611px;top:57px;width:56px;height:15px;line-height:14px;background:#0a3858;color:#fff">回撤统计</div><div class="btn" style="left:675px;top:57px;width:56px;height:15px;line-height:14px;color:#6a645c;border-color:#06405a">仓位统计</div><div class="btn" style="left:611px;top:77px;width:56px;height:15px;line-height:14px;color:#6a645c;border-color:#06405a">利息统计</div><div class="btn" style="left:675px;top:77px;width:56px;height:15px;line-height:14px;color:#6a645c;border-color:#06405a">返佣统计</div><div class="pn" style="left:64px;top:102px;color:#dfe8ee">日 期</div><div class="pn" style="left:119px;top:102px;color:#dfe8ee">单 量</div><div class="pn" style="left:177px;top:102px;color:#dfe8ee">手 数</div><div class="pn" style="left:237px;top:102px;color:#dfe8ee">盈 亏</div><div class="pn" style="left:301px;top:102px;color:#dfe8ee">盈利率</div><div class="pn" style="left:368px;top:102px;color:#dfe8ee">最大浮亏</div><div class="pn" style="left:444px;top:102px;color:#dfe8ee">浮亏比例</div><div class="pn" style="left:520px;top:102px;color:#dfe8ee">最大浮盈</div><div class="pn" style="left:596px;top:102px;color:#dfe8ee">浮盈比例</div><div class="pn" style="left:671px;top:102px;color:#dfe8ee">余 额</div><div class="btn" style="left:18px;top:122px;width:24px;height:21px;line-height:20px;padding-right:2px;border-right:none;border-radius:3px 0 0 3px;background:#044c68">日</div><div class="btn" style="left:18px;top:150px;width:24px;height:21px;line-height:20px;padding-right:2px;border-right:none;border-radius:3px 0 0 3px">周</div><div class="btn" style="left:18px;top:178px;width:24px;height:21px;line-height:20px;padding-right:2px;border-right:none;border-radius:3px 0 0 3px">月</div><div class="btn" style="left:18px;top:206px;width:24px;height:21px;line-height:20px;padding-right:2px;border-right:none;border-radius:3px 0 0 3px">年</div><div class="btn" style="left:9px;top:233px;width:32px;height:22px;line-height:21px;padding-right:1px;border-right:none;border-radius:3px 0 0 3px">单币</div><div class="btn" style="left:9px;top:261px;width:32px;height:22px;line-height:21px;padding-right:1px;border-right:none;border-radius:3px 0 0 3px">持仓</div><div class="btn" style="left:9px;top:289px;width:32px;height:22px;line-height:21px;padding-right:1px;border-right:none;border-radius:3px 0 0 3px">品种</div><div class="btn" style="left:9px;top:317px;width:32px;height:22px;line-height:21px;padding-right:1px;border-right:none;border-radius:3px 0 0 3px">魔号</div><div class="btn" style="left:9px;top:345px;width:32px;height:22px;line-height:21px;padding-right:1px;border-right:none;border-radius:3px 0 0 3px">波幅</div><div class="btn" style="left:9px;top:373px;width:32px;height:22px;line-height:21px;padding-right:1px;border-right:none;border-radius:3px 0 0 3px">属性</div><div class="btn" style="left:9px;top:401px;width:32px;height:22px;line-height:21px;padding-right:1px;border-right:none;border-radius:3px 0 0 3px">大字</div><div class="btn" style="left:9px;top:429px;width:32px;height:21px;line-height:20px;border-right:none">VIP</div><div class="btn" style="left:9px;top:450px;width:32px;height:21px;line-height:20px;border-right:none">观摩</div><div class="btn" style="left:9px;top:471px;width:32px;height:14px;line-height:11px;font-size:11px;border-right:none">v</div><div class="row" style="top:128px;left:0"><span class="r" style="left:62px">01.03</span><span class="r" style="left:121px">45</span><span class="r" style="left:177px">0.36</span><span class="r" style="left:233px">54.98</span><span class="r" style="left:301px">1.83%</span><span class="g" style="left:368px">-34.29</span><span class="g" style="left:444px">-1.07%</span><span class="r" style="left:520px">6.42</span><span class="r" style="left:596px">0.20%</span><span class="r" style="left:663px">3212.74</span></div>
<div class="row" style="top:144px;left:0"><span class="r" style="left:62px">01.02</span><span class="r" style="left:121px">71</span><span class="r" style="left:177px">0.63</span><span class="r" style="left:233px">67.40</span><span class="r" style="left:301px">2.25%</span><span class="g" style="left:368px">-47.04</span><span class="g" style="left:444px">-1.52%</span><span class="r" style="left:520px">9.13</span><span class="r" style="left:596px">0.29%</span><span class="r" style="left:663px">3157.76</span></div>
<div class="row" style="top:160px;left:0"><span class="r" style="left:62px">12.31</span><span class="r" style="left:121px">47</span><span class="r" style="left:177px">0.38</span><span class="r" style="left:233px">35.52</span><span class="r" style="left:301px">1.18%</span><span class="g" style="left:368px">-49.11</span><span class="g" style="left:444px">-1.59%</span><span class="r" style="left:520px">6.99</span><span class="r" style="left:596px">0.23%</span><span class="r" style="left:663px">3090.36</span></div>
<div class="row" style="top:176px;left:0"><span class="r" style="left:62px">12.30</span><span class="r" style="left:121px">60</span><span class="r" style="left:177px">0.53</span><span class="r" style="left:233px">54.84</span><span class="r" style="left:301px">1.83%</span><span class="w" style="left:368px">0.00</span><span class="w" style="left:444px">0.00%</span><span class="w" style="left:520px">0.00</span><span class="w" style="left:596px">0.00%</span><span class="r" style="left:663px">3054.84</span></div>
<div class="row" style="top:192px;left:0"><span class="w" style="left:62px">12.27</span><span class="w" style="left:121px">0</span><span class="w" style="left:177px">0.00</span><span class="w" style="left:233px">0.00</span><span class="w" style="left:301px">0.00%</span><span class="w" style="left:368px">0.00</span><span class="w" style="left:444px">0.00%</span><span class="w" style="left:520px">0.00</span><span class="w" style="left:596px">0.00%</span><span class="w" style="left:663px">3000.00</span></div>
<div class="row" style="top:208px;left:0"><span class="w" style="left:62px">12.26</span><span class="w" style="left:121px">0</span><span class="w" style="left:177px">0.00</span><span class="w" style="left:233px">0.00</span><span class="w" style="left:301px">0.00%</span><span class="w" style="left:368px">0.00</span><span class="w" style="left:444px">0.00%</span><span class="w" style="left:520px">0.00</span><span class="w" style="left:596px">0.00%</span><span class="w" style="left:663px">0.00</span></div>
<div class="row" style="top:224px;left:0"><span class="w" style="left:62px">12.24</span><span class="w" style="left:121px">0</span><span class="w" style="left:177px">0.00</span><span class="w" style="left:233px">0.00</span><span class="w" style="left:301px">0.00%</span><span class="w" style="left:368px">0.00</span><span class="w" style="left:444px">0.00%</span><span class="w" style="left:520px">0.00</span><span class="w" style="left:596px">0.00%</span><span class="w" style="left:663px">0.00</span></div>
<div class="row" style="top:240px;left:0"><span class="w" style="left:62px">12.23</span><span class="w" style="left:121px">0</span><span class="w" style="left:177px">0.00</span><span class="w" style="left:233px">0.00</span><span class="w" style="left:301px">0.00%</span><span class="w" style="left:368px">0.00</span><span class="w" style="left:444px">0.00%</span><span class="w" style="left:520px">0.00</span><span class="w" style="left:596px">0.00%</span><span class="w" style="left:663px">0.00</span></div>
<div class="row" style="top:256px;left:0"><span class="w" style="left:62px">12.20</span><span class="w" style="left:121px">0</span><span class="w" style="left:177px">0.00</span><span class="w" style="left:233px">0.00</span><span class="w" style="left:301px">0.00%</span><span class="w" style="left:368px">0.00</span><span class="w" style="left:444px">0.00%</span><span class="w" style="left:520px">0.00</span><span class="w" style="left:596px">0.00%</span><span class="w" style="left:663px">0.00</span></div>
<div class="row" style="top:272px;left:0"><span class="w" style="left:62px">12.19</span><span class="w" style="left:121px">0</span><span class="w" style="left:177px">0.00</span><span class="w" style="left:233px">0.00</span><span class="w" style="left:301px">0.00%</span><span class="w" style="left:368px">0.00</span><span class="w" style="left:444px">0.00%</span><span class="w" style="left:520px">0.00</span><span class="w" style="left:596px">0.00%</span><span class="w" style="left:663px">0.00</span></div>
<div class="row" style="top:288px;left:0"><span class="w" style="left:62px">12.18</span><span class="w" style="left:121px">0</span><span class="w" style="left:177px">0.00</span><span class="w" style="left:233px">0.00</span><span class="w" style="left:301px">0.00%</span><span class="w" style="left:368px">0.00</span><span class="w" style="left:444px">0.00%</span><span class="w" style="left:520px">0.00</span><span class="w" style="left:596px">0.00%</span><span class="w" style="left:663px">0.00</span></div>
<div class="row" style="top:304px;left:0"><span class="w" style="left:62px">12.17</span><span class="w" style="left:121px">0</span><span class="w" style="left:177px">0.00</span><span class="w" style="left:233px">0.00</span><span class="w" style="left:301px">0.00%</span><span class="w" style="left:368px">0.00</span><span class="w" style="left:444px">0.00%</span><span class="w" style="left:520px">0.00</span><span class="w" style="left:596px">0.00%</span><span class="w" style="left:663px">0.00</span></div>
<div class="row" style="top:320px;left:0"><span class="w" style="left:62px">12.16</span><span class="w" style="left:121px">0</span><span class="w" style="left:177px">0.00</span><span class="w" style="left:233px">0.00</span><span class="w" style="left:301px">0.00%</span><span class="w" style="left:368px">0.00</span><span class="w" style="left:444px">0.00%</span><span class="w" style="left:520px">0.00</span><span class="w" style="left:596px">0.00%</span><span class="w" style="left:663px">0.00</span></div>
<div class="row" style="top:336px;left:0"><span class="w" style="left:62px">12.13</span><span class="w" style="left:121px">0</span><span class="w" style="left:177px">0.00</span><span class="w" style="left:233px">0.00</span><span class="w" style="left:301px">0.00%</span><span class="w" style="left:368px">0.00</span><span class="w" style="left:444px">0.00%</span><span class="w" style="left:520px">0.00</span><span class="w" style="left:596px">0.00%</span><span class="w" style="left:663px">0.00</span></div>
<div class="row" style="top:352px;left:0"><span class="w" style="left:62px">12.12</span><span class="w" style="left:121px">0</span><span class="w" style="left:177px">0.00</span><span class="w" style="left:233px">0.00</span><span class="w" style="left:301px">0.00%</span><span class="w" style="left:368px">0.00</span><span class="w" style="left:444px">0.00%</span><span class="w" style="left:520px">0.00</span><span class="w" style="left:596px">0.00%</span><span class="w" style="left:663px">0.00</span></div>
<div class="row" style="top:368px;left:0"><span class="w" style="left:62px">12.11</span><span class="w" style="left:121px">0</span><span class="w" style="left:177px">0.00</span><span class="w" style="left:233px">0.00</span><span class="w" style="left:301px">0.00%</span><span class="w" style="left:368px">0.00</span><span class="w" style="left:444px">0.00%</span><span class="w" style="left:520px">0.00</span><span class="w" style="left:596px">0.00%</span><span class="w" style="left:663px">0.00</span></div>
<div class="row" style="top:384px;left:0"><span class="w" style="left:62px">12.10</span><span class="w" style="left:121px">0</span><span class="w" style="left:177px">0.00</span><span class="w" style="left:233px">0.00</span><span class="w" style="left:301px">0.00%</span><span class="w" style="left:368px">0.00</span><span class="w" style="left:444px">0.00%</span><span class="w" style="left:520px">0.00</span><span class="w" style="left:596px">0.00%</span><span class="w" style="left:663px">0.00</span></div>
<div class="row" style="top:400px;left:0"><span class="w" style="left:62px">12.09</span><span class="w" style="left:121px">0</span><span class="w" style="left:177px">0.00</span><span class="w" style="left:233px">0.00</span><span class="w" style="left:301px">0.00%</span><span class="w" style="left:368px">0.00</span><span class="w" style="left:444px">0.00%</span><span class="w" style="left:520px">0.00</span><span class="w" style="left:596px">0.00%</span><span class="w" style="left:663px">0.00</span></div>
<div class="row" style="top:416px;left:0"><span class="w" style="left:62px">12.06</span><span class="w" style="left:121px">0</span><span class="w" style="left:177px">0.00</span><span class="w" style="left:233px">0.00</span><span class="w" style="left:301px">0.00%</span><span class="w" style="left:368px">0.00</span><span class="w" style="left:444px">0.00%</span><span class="w" style="left:520px">0.00</span><span class="w" style="left:596px">0.00%</span><span class="w" style="left:663px">0.00</span></div>
<div class="row" style="top:432px;left:0"><span class="w" style="left:62px">12.05</span><span class="w" style="left:121px">0</span><span class="w" style="left:177px">0.00</span><span class="w" style="left:233px">0.00</span><span class="w" style="left:301px">0.00%</span><span class="w" style="left:368px">0.00</span><span class="w" style="left:444px">0.00%</span><span class="w" style="left:520px">0.00</span><span class="w" style="left:596px">0.00%</span><span class="w" style="left:663px">0.00</span></div>
<div class="row" style="top:448px;left:0"><span class="w" style="left:62px">12.04</span><span class="w" style="left:121px">0</span><span class="w" style="left:177px">0.00</span><span class="w" style="left:233px">0.00</span><span class="w" style="left:301px">0.00%</span><span class="w" style="left:368px">0.00</span><span class="w" style="left:444px">0.00%</span><span class="w" style="left:520px">0.00</span><span class="w" style="left:596px">0.00%</span><span class="w" style="left:663px">0.00</span></div>
<div class="row" style="top:464px;left:0"><span class="w" style="left:62px">12.03</span><span class="w" style="left:121px">0</span><span class="w" style="left:177px">0.00</span><span class="w" style="left:233px">0.00</span><span class="w" style="left:301px">0.00%</span><span class="w" style="left:368px">0.00</span><span class="w" style="left:444px">0.00%</span><span class="w" style="left:520px">0.00</span><span class="w" style="left:596px">0.00%</span><span class="w" style="left:663px">0.00</span></div>
<div class="row" style="top:494px;left:0"><span class="r" style="left:62px">22<i>天汇总</i></span><span class="r" style="left:121px">223</span><span class="r" style="left:177px">1.90</span><span class="r" style="left:233px">212.74</span><span class="r" style="left:301px">7.09%</span><span class="r" style="left:368px">-49.11</span><span class="r" style="left:444px">-1.59%</span><span class="r" style="left:520px">9.13</span><span class="r" style="left:596px">0.29%</span><span class="r" style="left:663px">3212.74</span></div>
<div class="a" style="left:41px;top:520px;width:172px;height:20px;background:#044c68;color:#e8eef2;font-size:21px;line-height:30px;text-align:center;overflow:hidden">小财神</div><div class="a" style="left:217px;top:520px;width:172px;height:20px;background:#044c68;color:#e8eef2;font-size:21px;line-height:30px;text-align:center;overflow:hidden">喊单推送QQ群</div><div class="a" style="left:393px;top:520px;width:172px;height:20px;background:#044c68;color:#e8eef2;font-size:21px;line-height:30px;text-align:center;overflow:hidden">最佳跟单平台</div><div class="a" style="left:569px;top:520px;width:172px;height:20px;background:#044c68;color:#e8eef2;font-size:21px;line-height:30px;text-align:center;overflow:hidden">EA定制开发</div></div>
<div id="rp" class="a" style="left:0;top:0;width:1133px;height:528px;overflow:hidden"><div class="a" style="left:750px;top:18px;width:369px;height:30px;border:1px dashed #0a6c8e;background:#02080c"></div><div class="a" style="left:750px;top:52px;width:369px;height:500px;border:1px dashed #0a6c8e;background:#02080c"></div><div class="dash" style="left:750px;top:81px"></div><div class="dash" style="left:750px;top:110px"></div><div class="dash" style="left:750px;top:151px"></div><div class="dash" style="left:750px;top:192px"></div><div class="dash" style="left:750px;top:233px"></div><div class="dash" style="left:750px;top:274px"></div><div class="dash" style="left:750px;top:315px"></div><div class="dash" style="left:750px;top:384px"></div><div class="dash" style="left:750px;top:421px"></div><div class="dash" style="left:750px;top:458px"></div><div class="dash" style="left:750px;top:495px"></div><div class="lb" style="left:764px;top:26px">温馨提示：在帐户历史中，右击选择<span class="l">&lt;</span>所有交易记录<span class="l">&gt;</span></div><div class="btn" style="left:1089px;top:23px;width:22px;height:20px;border-color:#1a6aa0"></div><svg class="a" style="left:1094px;top:28px" width="11" height="11"><path d="M1 1L10 10M10 1L1 10" stroke="#fff" stroke-width="1.3"/></svg><div class="lb" style="left:764px;top:60px">平台杠杆：<span class="n">500</span></div><div class="lb" style="left:874px;top:60px">帐户类型：模拟帐户</div><div class="lb" style="left:1009px;top:60px">平台支持<span class="u" style="margin-right:-2.5px">EA</span>交易</div><div class="lb" style="left:764px;top:89px">开户日期：<span class="n" style="margin-right:2px">2024.12.27</span> 存活了<span class="n">5</span>个交易日</div><div class="lb" style="left:1019px;top:89px">交易周期：<span class="n">2</span>周</div><div class="lb" style="left:864px;top:124px">总盈亏金额</div><div class="vl" style="left:934px;top:120px">212.74</div><div class="lb" style="left:764px;top:158px">盈利率</div><div class="vl" style="left:764px;top:170.8px">7.09%</div><div class="lb" style="left:860px;top:158px">利润因子</div><div class="vl" style="left:860px;top:170.8px">1.83</div><div class="lb" style="left:956px;top:158px">准确率</div><div class="vl" style="left:956px;top:170.8px">39.91%</div><div class="lb" style="left:1052px;top:158px">盈亏比</div><div class="vl" style="left:1052px;top:170.8px">2.04</div><div class="lb" style="left:764px;top:199px">最大浮亏</div><div class="vl" style="left:764px;top:211.8px">-49.11</div><div class="lb" style="left:860px;top:199px">余额回撤</div><div class="vl" style="left:860px;top:211.8px">-1.59%</div><div class="lb" style="left:956px;top:199px">最小净值</div><div class="vl" style="left:956px;top:211.8px">3031.41</div><div class="lb" style="left:1052px;top:199px">本金回撤</div><div class="vl" style="left:1052px;top:211.8px">0.00%</div><div class="lb" style="left:764px;top:240px">总入金</div><div class="vl" style="left:764px;top:252.8px">3000.00</div><div class="lb" style="left:860px;top:240px">入金次数</div><div class="vl" style="left:860px;top:252.8px">1</div><div class="lb" style="left:956px;top:240px">总出金</div><div class="vl" style="left:956px;top:252.8px">0.00</div><div class="lb" style="left:1052px;top:240px">出金次数</div><div class="vl" style="left:1052px;top:252.8px">0</div><div class="lb" style="left:844px;top:281px">最大占保证金</div><div class="vl" style="left:844px;top:293.8px">47.16</div><div class="lb" style="left:956px;top:281px">最大使用仓位</div><div class="vl" style="left:956px;top:293.8px">1.53%</div><div class="lb" style="left:780px;top:323px">日均收益</div><div class="lb n" style="left:867px;top:323px">42.55</div><div class="lb n" style="left:940px;top:323px">1.42%</div><div class="lb" style="left:780px;top:343px">周均收益</div><div class="lb n" style="left:867px;top:343px">212.74</div><div class="lb n" style="left:940px;top:343px">7.09%</div><div class="lb" style="left:780px;top:363px">月均收益</div><div class="lb n" style="left:867px;top:363px">936.06</div><div class="lb n" style="left:940px;top:363px">31.20%</div><div class="lb" style="left:1019px;top:323px">预期年化收益</div><div class="vl" style="left:1020px;top:343px">374.42%</div><div class="lb" style="left:764px;top:391px">交易手数</div><div class="vl sm" style="left:764px;top:403.0px">1.90</div><div class="lb" style="left:860px;top:391px">日均手数</div><div class="vl sm" style="left:860px;top:403.0px">0.38</div><div class="lb" style="left:956px;top:391px">周均手数</div><div class="vl sm" style="left:956px;top:403.0px">1.90</div><div class="lb" style="left:1052px;top:391px">月均手数</div><div class="vl sm" style="left:1052px;top:403.0px">8.36</div><div class="lb" style="left:764px;top:428px">交易笔数</div><div class="vl sm" style="left:764px;top:440.0px">223</div><div class="lb" style="left:860px;top:428px">盈利笔数</div><div class="vl sm" style="left:860px;top:440.0px">89</div><div class="lb" style="left:956px;top:428px">亏损笔数</div><div class="vl sm" style="left:956px;top:440.0px">99</div><div class="lb" style="left:1052px;top:428px">交易频率</div><div class="vl sm" style="left:1052px;top:440.0px">45笔/天</div><div class="lb" style="left:764px;top:465px">最大手数</div><div class="vl sm" style="left:764px;top:477.0px">0.02</div><div class="lb" style="left:860px;top:465px">最小手数</div><div class="vl sm" style="left:860px;top:477.0px">0.01</div><div class="lb" style="left:948px;top:465px">平均开仓手数</div><div class="vl sm" style="left:956px;top:477.0px">0.01</div><div class="lb" style="left:1044px;top:465px">每手平均盈亏</div><div class="vl sm" style="left:1052px;top:477.0px">111.97</div><div class="lb" style="left:764px;top:502px">最大盈利</div><div class="vl sm" style="left:764px;top:513.0px">14.66</div><div class="lb" style="left:860px;top:502px">最大亏损</div><div class="vl sm" style="left:860px;top:513.0px">-9.31</div><div class="lb" style="left:956px;top:502px">平均盈利</div><div class="vl sm" style="left:956px;top:513.0px">5.26</div><div class="lb" style="left:1052px;top:502px">平均亏损</div><div class="vl sm" style="left:1052px;top:513.0px">-2.58</div></div>
<div class="big" style="left:1155px;top:86px;font-size:27px">【升级版本】</div><div class="big" style="left:1157px;top:169px">在原来基础上，进行了深度优化</div><div class="big" style="left:1157px;top:200px">同时间，也增加了部分功能：</div><div class="big" style="left:1157px;top:231px">【涉及交易核心，这里不便展开阐述】</div><div class="big" style="left:1157px;top:293px">整体优化升级之后，</div><div class="big" style="left:1157px;top:324px">风险系数更低，盈利能力大大提高</div><div class="big" style="left:1157px;top:386px">建议：1500美金即可同步跟单</div><div class="a" style="left:3px;top:529px;width:1px;height:3px;background:#fff"></div><div class="ax" style="left:2.4px;top:533px;font-size:11.8px;letter-spacing:0.3px">22 Nov 2024</div><div class="a" style="left:99px;top:529px;width:1px;height:3px;background:#fff"></div><div class="ax" style="left:98.4px;top:533px;font-size:11.8px;letter-spacing:0.3px">26 Nov 10:00</div><div class="a" style="left:195px;top:529px;width:1px;height:3px;background:#fff"></div><div class="ax" style="left:194.4px;top:533px;font-size:11.8px;letter-spacing:0.3px">28 Nov 12:00</div><div class="a" style="left:291px;top:529px;width:1px;height:3px;background:#fff"></div><div class="ax" style="left:290.4px;top:533px;font-size:11.8px;letter-spacing:0.3px">2 Dec 18:00</div><div class="a" style="left:387px;top:529px;width:1px;height:3px;background:#fff"></div><div class="ax" style="left:386.4px;top:533px;font-size:11.8px;letter-spacing:0.3px">4 Dec 20:00</div><div class="a" style="left:483px;top:529px;width:1px;height:3px;background:#fff"></div><div class="ax" style="left:482.4px;top:533px;font-size:11.8px;letter-spacing:0.3px">6 Dec 22:00</div><div class="a" style="left:579px;top:529px;width:1px;height:3px;background:#fff"></div><div class="ax" style="left:578.4px;top:533px;font-size:11.8px;letter-spacing:0.3px">11 Dec 01:00</div><div class="a" style="left:675px;top:529px;width:1px;height:3px;background:#fff"></div><div class="ax" style="left:674.4px;top:533px;font-size:11.8px;letter-spacing:0.3px">13 Dec 03:00</div><div class="a" style="left:771px;top:529px;width:1px;height:3px;background:#fff"></div><div class="ax" style="left:770.4px;top:533px;font-size:11.8px;letter-spacing:0.3px">17 Dec 05:00</div><div class="a" style="left:867px;top:529px;width:1px;height:3px;background:#fff"></div><div class="ax" style="left:866.4px;top:533px;font-size:11.8px;letter-spacing:0.3px">19 Dec 07:00</div><div class="a" style="left:963px;top:529px;width:1px;height:3px;background:#fff"></div><div class="ax" style="left:962.4px;top:533px;font-size:11.8px;letter-spacing:0.3px">23 Dec 09:00</div><div class="a" style="left:1059px;top:529px;width:1px;height:3px;background:#fff"></div><div class="ax" style="left:1058.4px;top:533px;font-size:11.8px;letter-spacing:0.3px">26 Dec 14:00</div><div class="a" style="left:1155px;top:529px;width:1px;height:3px;background:#fff"></div><div class="ax" style="left:1154.4px;top:533px;font-size:11.8px;letter-spacing:0.3px">30 Dec 16:00</div><div class="a" style="left:1251px;top:529px;width:1px;height:3px;background:#fff"></div><div class="ax" style="left:1250.4px;top:533px;font-size:11.8px;letter-spacing:0.3px">2 Jan 20:00</div><div class="a" style="left:1634px;top:19px;width:3px;height:1px;background:#fff"></div><div class="ax" style="left:1640px;top:12.5px">2728.85</div><div class="a" style="left:1634px;top:68px;width:3px;height:1px;background:#fff"></div><div class="ax" style="left:1640px;top:61.5px">2714.35</div><div class="a" style="left:1634px;top:117px;width:3px;height:1px;background:#fff"></div><div class="ax" style="left:1640px;top:110.5px">2699.85</div><div class="a" style="left:1634px;top:166px;width:3px;height:1px;background:#fff"></div><div class="ax" style="left:1640px;top:159.5px">2685.35</div><div class="a" style="left:1634px;top:215px;width:3px;height:1px;background:#fff"></div><div class="ax" style="left:1640px;top:208.5px">2670.85</div><div class="a" style="left:1634px;top:264px;width:3px;height:1px;background:#fff"></div><div class="ax" style="left:1640px;top:257.5px">2656.35</div><div class="a" style="left:1634px;top:313px;width:3px;height:1px;background:#fff"></div><div class="ax" style="left:1640px;top:306.5px">2642.10</div><div class="a" style="left:1634px;top:362px;width:3px;height:1px;background:#fff"></div><div class="ax" style="left:1640px;top:355.5px">2627.60</div><div class="a" style="left:1634px;top:411px;width:3px;height:1px;background:#fff"></div><div class="ax" style="left:1640px;top:404.5px">2613.10</div><div class="a" style="left:1634px;top:460px;width:3px;height:1px;background:#fff"></div><div class="ax" style="left:1640px;top:453.5px">2598.60</div><div class="a" style="left:1634px;top:509px;width:3px;height:1px;background:#fff"></div><div class="ax" style="left:1640px;top:502.5px">2584.10</div><div class="a" style="left:1635px;top:312px;width:56px;height:15px;background:#fff"></div><div class="ax" style="left:1640px;top:313px;color:#000">2640.33</div>
<div class="wm d" style="left:96px;top:31px">EAHub.cn</div><div class="wm d" style="left:346px;top:31px">EAHub.cn</div><div class="wm d" style="left:596px;top:31px">EAHub.cn</div><div class="wm d" style="left:846px;top:31px">EAHub.cn</div><div class="wm d" style="left:1096px;top:31px">EAHub.cn</div><div class="wm d" style="left:1346px;top:31px">EAHub.cn</div><div class="wm d" style="left:1596px;top:31px">EAHub.cn</div><div class="wm d" style="left:96px;top:283px">EAHub.cn</div><div class="wm d" style="left:346px;top:283px">EAHub.cn</div><div class="wm d" style="left:596px;top:283px">EAHub.cn</div><div class="wm d" style="left:846px;top:283px">EAHub.cn</div><div class="wm d" style="left:1096px;top:283px">EAHub.cn</div><div class="wm d" style="left:1346px;top:283px">EAHub.cn</div><div class="wm d" style="left:1596px;top:283px">EAHub.cn</div><div class="wm d" style="left:96px;top:530px">EAHub.cn</div><div class="wm d" style="left:346px;top:530px">EAHub.cn</div><div class="wm d" style="left:596px;top:530px">EAHub.cn</div><div class="wm d" style="left:846px;top:530px">EAHub.cn</div><div class="wm d" style="left:1096px;top:530px">EAHub.cn</div><div class="wm d" style="left:1346px;top:530px">EAHub.cn</div><div class="wm d" style="left:1596px;top:530px">EAHub.cn</div>
</div>
</body></html>
